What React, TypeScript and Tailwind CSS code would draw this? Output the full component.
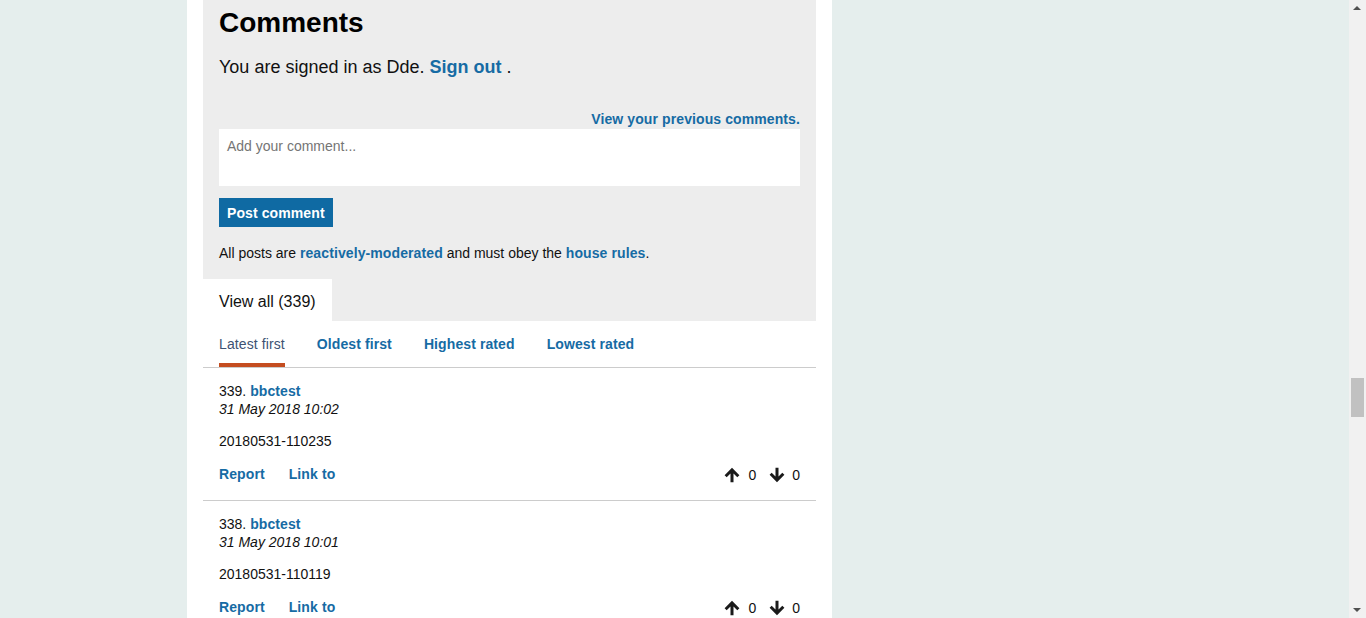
import React from "react";

const font = { fontFamily: '"Liberation Sans", Arial, sans-serif' };

function ArrowUp() {
  return (
    <svg width="16" height="16" viewBox="0 0 16 16" className="block">
      <path d="M8 0.8 L0.6 8.2 L2.7 10.3 L6.5 6.5 V15.2 H9.5 V6.5 L13.3 10.3 L15.4 8.2 Z" fill="#1a1a1a" />
    </svg>
  );
}

function ArrowDown() {
  return (
    <svg width="16" height="16" viewBox="0 0 16 16" className="block">
      <path d="M8 15.2 L0.6 7.8 L2.7 5.7 L6.5 9.5 V0.8 H9.5 V9.5 L13.3 5.7 L15.4 7.8 Z" fill="#1a1a1a" />
    </svg>
  );
}

type C = { n: number; date: string; body: string };

function Comment({ c }: { c: C }) {
  return (
    <div className="border-b border-[#cccccc] px-4 pt-[14px] pb-[17px] text-[14px] leading-[18px] text-[#111]">
      <div>
        {c.n}. <a className="font-bold tracking-[0.1px] text-[#166ba4]">bbctest</a>
      </div>
      <div className="italic">{c.date}</div>
      <div className="mt-[14px]">{c.body}</div>
      <div className="mt-[15px] flex h-[18px] items-center">
        <a className="font-bold tracking-[0.1px] text-[#166ba4]">Report</a>
        <a className="ml-6 font-bold tracking-[0.1px] text-[#166ba4]">Link to</a>
        <div className="ml-auto flex h-[18px] items-center pt-[2px]">
          <span className="ml-[1px]">
            <ArrowUp />
          </span>
          <span className="ml-[8px]">0</span>
          <span className="ml-[13px]">
            <ArrowDown />
          </span>
          <span className="ml-[7px]">0</span>
        </div>
      </div>
    </div>
  );
}

export default function App() {
  const comments: C[] = [
    { n: 339, date: "31 May 2018 10:02", body: "20180531-110235" },
    { n: 338, date: "31 May 2018 10:01", body: "20180531-110119" },
  ];
  return (
    <div className="flex h-[618px] w-[1366px] overflow-hidden bg-[#e5eeed]" style={font}>
      <div className="flex-1">
        <div className="ml-[187px] h-full w-[645px] bg-white px-4">
          <div className="bg-[#ededed]">
            <div className="px-4 pt-[6px]">
              <h2 className="text-[28px] font-bold leading-[34px] text-black">Comments</h2>
              <p className="mt-[15px] text-[18px] leading-[24px] text-[#111]">
                You are signed in as Dde. <a className="font-bold text-[#166ba4]">Sign out</a> .
              </p>
              <div className="mt-[31px] text-right text-[14px] font-bold leading-[18px] tracking-[0.1px] text-[#166ba4]">
                View your previous comments.
              </div>
              <div className="mt-[1px] h-[57px] bg-white px-2 py-2 text-[14px] leading-[18px] text-[#757575]">
                Add your comment...
              </div>
              <button className="mt-[12px] h-[29px] bg-[#0f6aa3] px-2 text-[14px] font-bold leading-[18px] tracking-[0.1px] text-white">
                Post comment
              </button>
              <p className="mt-[17px] text-[14px] leading-[18px] text-[#111]">
                All posts are <a className="font-bold tracking-[0.1px] text-[#166ba4]">reactively-moderated</a> and must
                obey the <a className="font-bold tracking-[0.1px] text-[#166ba4]">house rules</a>.
              </p>
            </div>
            <div className="mt-[17px] flex">
              <div className="flex h-[42px] items-center bg-white px-4 pt-[3px] text-[16px] text-[#111]">
                View all (339)
              </div>
            </div>
          </div>
          <div className="flex gap-8 border-b border-[#cccccc] px-4 text-[14px] leading-[18px]">
            <div className="border-b-4 border-[#c44d20] pt-[14px] pb-[10px] tracking-[0.1px] text-[#3d5273]">
              Latest first
            </div>
            <div className="pt-[14px] pb-[14px] font-bold tracking-[0.1px] text-[#166ba4]">Oldest first</div>
            <div className="pt-[14px] pb-[14px] font-bold tracking-[0.1px] text-[#166ba4]">Highest rated</div>
            <div className="pt-[14px] pb-[14px] font-bold tracking-[0.1px] text-[#166ba4]">Lowest rated</div>
          </div>
          {comments.map((c) => (
            <Comment key={c.n} c={c} />
          ))}
        </div>
      </div>
      <div className="relative h-full w-[17px] bg-[#f1f1f1]">
        <div className="absolute left-[4px] top-[6px] h-0 w-0 border-x-[4px] border-b-[4px] border-x-transparent border-b-[#505050]" />
        <div className="absolute left-[2px] top-[378px] h-[39px] w-[13px] bg-[#c1c1c1]" />
        <div className="absolute bottom-[6px] left-[4px] h-0 w-0 border-x-[4px] border-t-[4px] border-x-transparent border-t-[#505050]" />
      </div>
    </div>
  );
}
